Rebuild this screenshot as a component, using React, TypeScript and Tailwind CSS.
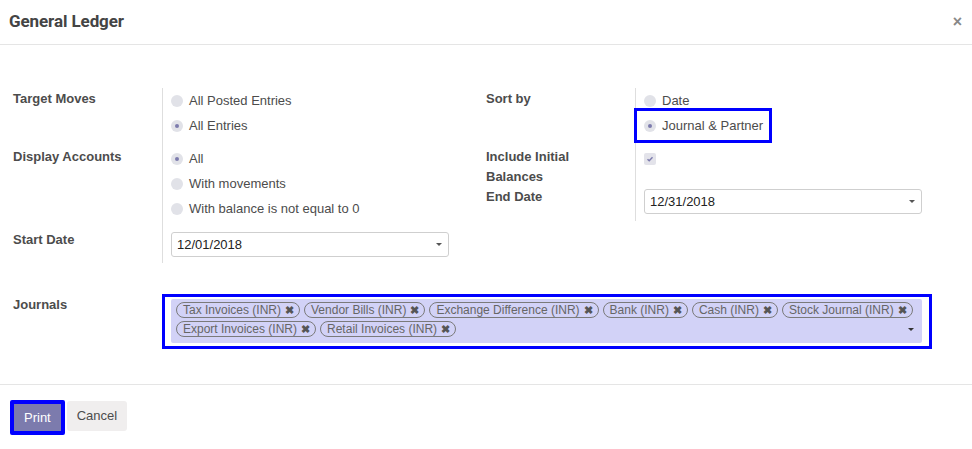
import React from 'react';

const Radio: React.FC<{ label: string; checked?: boolean; highlight?: boolean }> = ({ label, checked, highlight }) => (
  <div className="h-[25px] flex items-center">
    <div
      className={
        'inline-flex items-center gap-[6px] ' +
        (highlight ? 'outline-[3px] outline-[#0000ff] outline-offset-[2px] h-[25px] -ml-[5px] pl-[5px] pr-[4px]' : '')
      }
    >
      <span className="w-[12px] h-[12px] rounded-full bg-[#e1e2e8] flex items-center justify-center">
        {checked && <span className="w-[4px] h-[4px] rounded-full bg-[#7c7bad]" />}
      </span>
      <span>{label}</span>
    </div>
  </div>
);

const Label: React.FC<{ children: React.ReactNode; className?: string }> = ({ children, className }) => (
  <div className={'w-[149px] shrink-0 font-bold leading-[20px] text-[#4c4c4c] ' + (className || 'pt-[1px]')}>{children}</div>
);

const DateInput: React.FC<{ value: string }> = ({ value }) => (
  <div className="h-[25px] w-[278px] border border-[#cfcfcf] rounded-[3px] flex items-center justify-between pl-[5px] pr-[6px] text-[#222]">
    <span>{value}</span>
    <span className="w-0 h-0 border-l-[3px] border-r-[3px] border-t-[3px] border-l-transparent border-r-transparent border-t-[#555]" />
  </div>
);

const Tag: React.FC<{ name: string }> = ({ name }) => (
  <span className="inline-flex items-center h-[16px] border-[1.5px] border-[#7a7a7a] rounded-full pl-[6px] pr-[5px] text-[12px] leading-none text-[#666] gap-[4px]">
    <span>{name}</span>
    <span className="text-[11px] font-bold text-[#555]">✖</span>
  </span>
);

const journals = [
  'Tax Invoices (INR)',
  'Vendor Bills (INR)',
  'Exchange Difference (INR)',
  'Bank (INR)',
  'Cash (INR)',
  'Stock Journal (INR)',
  'Export Invoices (INR)',
  'Retail Invoices (INR)',
];

export default function App() {
  return (
    <div className="w-[972px] h-[449px] bg-white text-[13px] text-[#4c4c4c] font-['Liberation_Sans',Arial,sans-serif] overflow-hidden">
      {/* Header */}
      <div className="h-[45px] border-b border-[#e5e5e5] flex items-center justify-between pl-[9px] pr-[10px]">
        <h4 className="font-['Roboto',sans-serif] font-bold text-[17px] text-[#444] tracking-[-0.1px]">General Ledger</h4>
        <span className="text-[16px] font-bold text-[#888]">×</span>
      </div>

      {/* Body */}
      <div className="h-[340px] border-b border-[#e5e5e5] pt-[43px] pl-[13px]">
        <div className="flex">
          {/* Left column */}
          <div className="w-[473px]">
            <div className="flex">
              <Label>Target Moves</Label>
              <div className="border-l border-[#dedede] pl-[8px] pb-[8px]">
                <Radio label="All Posted Entries" />
                <Radio label="All Entries" checked />
              </div>
            </div>
            <div className="flex">
              <Label>Display Accounts</Label>
              <div className="border-l border-[#dedede] pl-[8px] pb-[7px]">
                <Radio label="All" checked />
                <Radio label="With movements" />
                <Radio label="With balance is not equal to 0" />
              </div>
            </div>
            <div className="flex">
              <Label className="pt-[2px]">Start Date</Label>
              <div className="border-l border-[#dedede] pl-[8px] pt-[4px] pb-[6px]">
                <DateInput value="12/01/2018" />
              </div>
            </div>
          </div>

          {/* Right column */}
          <div className="w-[436px]">
            <div className="flex">
              <Label>Sort by</Label>
              <div className="border-l border-[#dedede] pl-[8px] pb-[8px] w-[287px]">
                <Radio label="Date" />
                <Radio label="Journal & Partner" checked highlight />
              </div>
            </div>
            <div className="flex">
              <Label>
                Include Initial
                <br />
                Balances
              </Label>
              <div className="border-l border-[#dedede] pl-[8px] pt-[7px] w-[287px]">
                <span className="w-[12px] h-[12px] rounded-[2px] bg-[#e3e3ea] flex items-center justify-center">
                  <svg width="8" height="8" viewBox="0 0 8 8">
                    <path d="M1.5 4.2 L3.2 5.8 L6.5 2.2" stroke="#7c7bad" strokeWidth="1.4" fill="none" />
                  </svg>
                </span>
              </div>
            </div>
            <div className="flex">
              <Label className="pt-[0px]">End Date</Label>
              <div className="border-l border-[#dedede] pl-[8px] pt-[2px] pb-[7px]">
                <DateInput value="12/31/2018" />
              </div>
            </div>
          </div>
        </div>

        {/* Journals */}
        <div className="flex mt-[31px]">
          <Label>Journals</Label>
          <div className="border-[3px] border-[#0000ff] pl-[6px] pr-[7px] pt-[2px] pb-[3px]">
            <div className="relative w-[751px] bg-[#d2d2f7] rounded-[2px] pl-[5px] pr-[3px] pt-[3px] pb-[6px] flex flex-wrap gap-x-[4px] gap-y-[3px]">
              {journals.map((j) => (
                <Tag key={j} name={j} />
              ))}
              <span className="absolute right-[8px] bottom-[12px] w-0 h-0 border-l-[3px] border-r-[3px] border-t-[3px] border-l-transparent border-r-transparent border-t-[#333]" />
            </div>
          </div>
        </div>
      </div>

      {/* Footer */}
      <div className="flex items-start gap-[2px] pl-[10px] pt-[15px]">
        <button className="border-[4px] border-[#0000ff] rounded-[2px] bg-[#7c7bad] text-white h-[35px] px-[10px]">Print</button>
        <button className="bg-[#f0eeee] text-[#4c4c4c] rounded-[3px] h-[30px] px-[10px] mt-[1px]">Cancel</button>
      </div>
    </div>
  );
}
